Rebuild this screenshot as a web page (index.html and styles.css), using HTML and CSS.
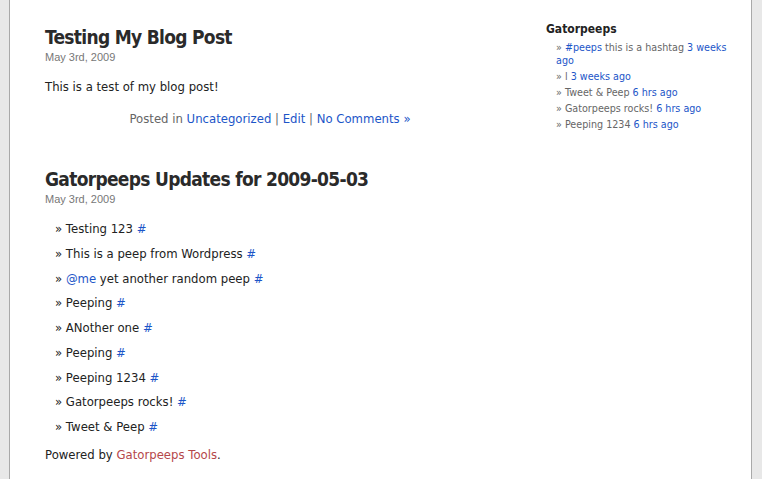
FILE: index.html
```html
<!DOCTYPE html>
<html>
<head>
<meta charset="utf-8">
<link rel="stylesheet" href="styles.css">
</head>
<body>
<div class="page">
  <div class="main">
    <div class="post">
      <h2 class="title">Testing My Blog Post</h2>
      <div class="date">May 3rd, 2009</div>
      <div class="entry"><p>This is a test of my blog post!</p></div>
      <p class="meta">Posted in <a href="#">Uncategorized</a> | <a href="#">Edit</a> | <a href="#">No Comments »</a></p>
    </div>
    <div class="post second">
      <h2 class="title">Gatorpeeps Updates for 2009-05-03</h2>
      <div class="date">May 3rd, 2009</div>
      <ul class="peeps">
        <li>» Testing 123 <a href="#">#</a></li>
        <li>» This is a peep from Wordpress <a href="#">#</a></li>
        <li>» <a href="#">@me</a> yet another random peep <a href="#">#</a></li>
        <li>» Peeping <a href="#">#</a></li>
        <li>» ANother one <a href="#">#</a></li>
        <li>» Peeping <a href="#">#</a></li>
        <li>» Peeping 1234 <a href="#">#</a></li>
        <li>» Gatorpeeps rocks! <a href="#">#</a></li>
        <li>» Tweet &amp; Peep <a href="#">#</a></li>
      </ul>
      <p class="powered">Powered by <a href="#">Gatorpeeps Tools</a>.</p>
    </div>
  </div>
  <div class="sidebar">
    <h3>Gatorpeeps</h3>
    <ul>
      <li>» <a href="#">#peeps</a> this is a hashtag <a href="#">3 weeks ago</a></li>
      <li>» l <a href="#">3 weeks ago</a></li>
      <li>» Tweet &amp; Peep <a href="#">6 hrs ago</a></li>
      <li>» Gatorpeeps rocks! <a href="#">6 hrs ago</a></li>
      <li>» Peeping 1234 <a href="#">6 hrs ago</a></li>
    </ul>
  </div>
</div>
</body>
</html>
```

FILE: styles.css
```css
html, body {
  margin: 0;
  padding: 0;
  height: 100%;
}
body {
  background: #e8e8e8;
  font-family: "DejaVu Sans", sans-serif;
  color: #222;
}
a { color: #1c55c8; text-decoration: none; }
.page {
  margin-left: 9px;
  width: 743px;
  min-height: 100%;
  background: #fff;
  border-left: 1px solid #a9a9a9;
  border-right: 1px solid #a9a9a9;
  display: flex;
  box-sizing: border-box;
}
.main {
  width: 450px;
  padding: 25px 0 0 35px;
}
.title {
  font-family: "DejaVu Sans Condensed", "DejaVu Sans", sans-serif;
  font-size: 19px;
  letter-spacing: -0.7px;
  font-weight: bold;
  color: #2a2a2a;
  margin: 0;
  line-height: 24px;
}
.date {
  font-family: "Liberation Sans", Arial, sans-serif;
  font-size: 11px;
  color: #777;
  line-height: 14px;
  margin-top: 1px;
}
.entry p {
  font-size: 11.7px;
  margin: 14px 0 0;
  line-height: 18px;
}
.meta {
  font-size: 11.7px;
  color: #666;
  text-align: center;
  margin: 14px 0 0;
  line-height: 18px;
}
.second { margin-top: 39px; }
.peeps {
  list-style: none;
  margin: 14px 0 0;
  padding: 0 0 0 10px;
  font-size: 11.7px;
}
.peeps li {
  line-height: 18px;
  margin-bottom: 6.75px;
}
.powered {
  font-size: 11.7px;
  margin: 10px 0 0;
  line-height: 18px;
}
.powered a { color: #b5474b; }
.sidebar {
  margin-left: 51px;
  width: 185px;
  padding-top: 21px;
}
.sidebar h3 {
  font-family: "DejaVu Sans Condensed", "DejaVu Sans", sans-serif;
  font-size: 12px;
  font-weight: bold;
  margin: 0 0 4px;
  color: #222;
  line-height: 16px;
}
.sidebar ul {
  list-style: none;
  margin: 0;
  padding: 0 0 0 10px;
  font-size: 9.6px;
  color: #666;
}
.sidebar li {
  line-height: 13px;
  margin-bottom: 3px;
}
```
